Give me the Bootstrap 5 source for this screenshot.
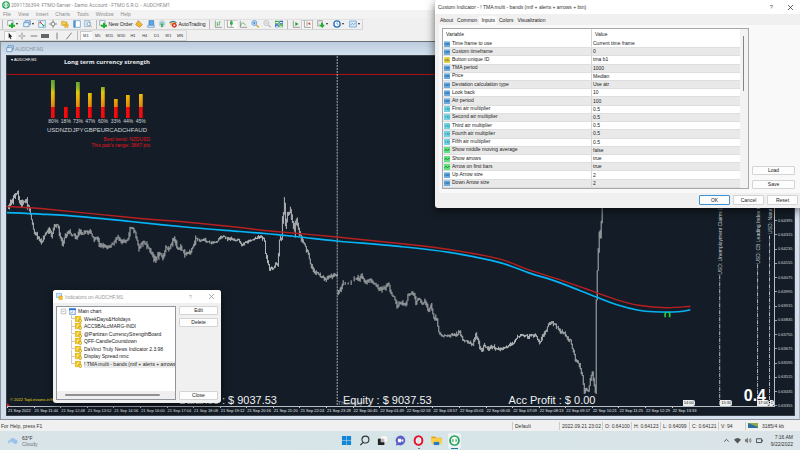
<!DOCTYPE html>
<html lang="en">
<head>
<meta charset="utf-8">
<meta name="viewport" content="width=device-width, initial-scale=1">
<title>AUDCHF,M1 - Trading terminal</title>
<link href="https://cdn.jsdelivr.net/npm/bootstrap@5.3.0/dist/css/bootstrap.min.css" rel="stylesheet">
<style>
:root{--ui:"Liberation Sans",Arial,sans-serif;--chart-bg:#141d27;--face:#f0f0f0}
body{font-family:var(--ui);font-size:5px;line-height:8px;color:#222;background:var(--face)}
svg{display:block}
button,a{color:inherit;text-decoration:none}
.titlebar{height:10px;padding:0 2px;background:#fff;color:#8b8b8b;gap:1px;font-family:Roboto,sans-serif}
.menubar{height:8px;padding-left:3px;color:#8b8b8b;background:#f3f3f3;gap:7px}
.tool-row{height:12px;background:var(--face)}
.tool-row+.tool-row{height:11px}
.tool-set{height:11px;border:1px solid #d5d5d5;border-left:0;border-top-color:#e2e2e2}
.tool-set>.grip{width:2px;height:9px;border-left:1px solid #bbb;margin:0 1px 0 2px}
.tool-set>.grip.bare{margin:0}
.tool-group{display:flex;align-items:center;height:100%}
.tool{border:0;background:none;padding:0;display:flex;align-items:center;justify-content:center;flex:1 1 0;height:100%;gap:1px;font-size:5px;line-height:8px;white-space:nowrap}
.g-frames .tool{font-size:4px;color:#333}
.tool.pressed{background:#fafafa;box-shadow:inset 1px 1px #ccc}
.tool svg{width:8px;height:8px;flex:none}
.tool .drop{width:0;height:0;border:1px solid transparent;border-top:2px solid #222;border-bottom:0}
.g-new{width:31px}.g-panels{width:58px}.g-order{width:34px}.g-extra{width:35px}.g-auto{width:39px}
.g-style{width:37px}.g-zoom{width:36px}.g-shift{width:22px}.g-menus{width:48px}.g-draw{width:75px}.g-frames{width:106px}
.mdi{background:#d5e0ee;border-top:1px solid #6b7077;border-bottom:1px solid #8b939c;min-height:0}
.child-title{height:13px;padding-left:5px;gap:1px;color:#8792a0;background:linear-gradient(#bccddd,#d3e1ef)}
.child-body{margin:0 4px 3px 5px;border:1px solid #3b4046;background:var(--chart-bg);color:#fff;min-height:0}
.edge{border-left:1px solid #8d939b;border-right:1px solid #aab3bf}
.plot{border-right:1px solid #b9bec4;border-bottom:1px solid #b9bec4}
.layer{position:absolute}
.prices{width:19px;padding:1px 0 2px;font-size:4px;line-height:4px;color:#d5d8db}
.prices span{flex:1 1 0;display:flex;align-items:center;gap:1px}
.prices span::before{content:"";width:2px;height:1px;background:#9ba1a7}
.times{display:grid;grid-template-columns:repeat(29,1fr);height:8px;margin-right:-3px;font-size:4px;line-height:8px;color:#e6e8ea;white-space:nowrap}
.times span{border-left:1px solid transparent;border-image:linear-gradient(#c9cdd1 2px,transparent 2px) 1}
.symbol-name{left:4px;top:1px;font-size:4px;line-height:6px}
.strength{left:40px;top:2px;width:103px}
.strength h2{font:bold 6px/8px "Open Sans",sans-serif;margin:0 0 14px;text-align:right;color:#e6e8ea;white-space:nowrap}
.meters{display:grid;grid-template-columns:repeat(8,1fr);width:100px;font-size:5px;line-height:7px;text-align:center;color:#d0d4d8}
.meters .tube{height:38px;display:flex;align-items:flex-end;justify-content:center}
.meters i{width:4px;background:linear-gradient(90deg,transparent 60%,#0005),linear-gradient(#5da63a,#8db52a 8px,#dccb0c 12px,#eeb00c 18px,#e0840d 27px,#f00d0d 27px) bottom/100% 38px}
.meters .ccy{font-size:6px;line-height:9px;margin-top:1px}
.trend{color:#e0141c;text-align:right;line-height:6px;margin-top:1px}
.account{left:0;right:0;bottom:0;font-size:11px;line-height:12px;color:#eef0f2;white-space:nowrap}
.account span,.flag,.news{position:absolute}
.account span{bottom:0}
.copyright{left:3px;bottom:3px;line-height:6px;font-size:4px;color:#e2d615}
.weekday{left:43.1%;bottom:-1px;font-size:6px;line-height:7px;color:#8d949b}
.spread{right:8px;bottom:2px;font:bold 16px/16px var(--ui);color:#fff}
.flag{bottom:0;height:6px;background:#eceeef;color:#222;font-size:4px;line-height:6px;padding:0 1px;border-radius:0 2px 2px 0;overflow:hidden}
.news{writing-mode:vertical-rl;transform:rotate(180deg);font-size:5px;line-height:6px;color:#c9cdd1;white-space:nowrap}
.statusbar{height:11px;background:var(--face);padding-left:1px;color:#333;white-space:nowrap}
.statusbar>span{border-left:1px solid #ccc;padding-left:2px;flex:none}
.w29{width:29px}.w47{width:47px}.w43{width:43px}.w27{width:27px}.w55{width:55px}
.taskbar{height:19px;background:linear-gradient(90deg,#d9e4e9,#d6e5e8 50%,#dbe4e8);color:#333}
.weather{left:8px;gap:4px;line-height:6px}
.apps{gap:5px}
.app{border:0;background:none;padding:2px 1px;border-radius:2px;position:relative;width:13px;height:16px;display:flex;align-items:center;justify-content:center}
.app svg{width:11px;height:11px}
.app.open::after{content:"";position:absolute;bottom:0;left:6px;width:2px;height:1px;background:#777}
.app.current{background:#ecf3f5}
.app.current::after{content:"";position:absolute;bottom:0;left:3px;width:7px;height:1px;background:#1b7f93}
.tray{right:7px;gap:4px}
.tray svg{width:7px;height:7px}
.clock{line-height:7px;text-align:right;min-width:26px}
.window{position:absolute;background:var(--face);border-radius:3px;box-shadow:0 3px 10px #0009;color:#222;overflow:hidden}
.window-title{background:#fff}
.window-title button{border:0;background:none;padding:0;width:19px;line-height:8px}
.push{border:1px solid #d4d4d4;border-radius:1px;background:#fdfdfd;padding:0;font-size:5px;line-height:7px;height:9px;color:#222}
.push.default{border-color:#3d93d6}
.props{top:0;right:0;width:365px;border-radius:3px 0 0 3px}
.props .window-title{height:14px;padding-left:3px;font-size:5px;color:#333}
.tabs{padding:2px 0 0 3px;line-height:9px}
.tabs button{border:0;background:none;padding:0 2px;font-size:5px;line-height:9px;white-space:nowrap}
.tabs .active{background:#f9f9f9}
.page{background:#f9f9f9;margin-left:4px;padding:3px 5px 4px 3px;gap:3px}
.gridbox{width:307px;height:161px;border:1px solid #a3a8ad;background:#fff;overflow:hidden}
.gridbox table{width:100%;height:159px;border-collapse:collapse;line-height:5px}
.gridbox th{font-weight:400;height:11px;padding:0 3px;vertical-align:middle}
.gridbox td{padding:0 1px;vertical-align:middle;border-bottom:1px solid #dedede}
.gridbox tbody tr:nth-child(even){background:#e9e9e9}
.gridbox th+th,.gridbox td+td{border-left:1px solid #d5d5d5;width:50%}
.gridbox th:first-child{width:50%}
.gridbox td svg{width:6px;height:6px;display:inline-block;margin-right:2px;vertical-align:middle}
.vbar{width:8px;flex:none;background:#f3f3f3;padding:7px 3px}
.vbar div{width:1px;height:55px;background:#858585}
.side{width:43px;gap:5px}
.foot{padding:2px 2px 3px;gap:3px}
.foot .push{width:31px;height:10px}
.list{left:53px;bottom:47px;width:168px}
.list .window-title{height:13px;padding-left:3px;gap:2px;color:#999}
.list .cols{padding:3px;gap:3px}
.treebox{width:120px;height:94px;border:1px solid #8f959b;background:#fff;padding-top:1px;overflow:hidden}
.tree{height:60px;margin:0;padding:0;list-style:none;white-space:nowrap;line-height:7px}
.tree li{flex:1 1 0;display:flex;align-items:center;gap:2px;padding-left:15px}
.tree li:first-child{padding-left:3px}
.tree li+li::before{content:"";flex:none;width:4px;height:7px;border-left:1px solid #ccc;border-bottom:1px solid #ccc;margin:-7px -2px 0 -1px}
.tree svg{width:7px;height:7px;flex:none}
.tree .sel{background:#ececec;height:7px;flex:1 1 0;min-width:0;overflow:hidden}
.hbar{height:8px;background:#efefef;padding:3px 15px 0 8px}
.hbar div{height:2px;background:#919191;border-radius:1px}
.col-btn{width:39px;gap:3px}
</style>
<script src="https://cdn.jsdelivr.net/npm/bootstrap@5.3.0/dist/js/bootstrap.bundle.min.js"></script>
</head>
<body class="vh-100 overflow-hidden position-relative d-flex flex-column">

<svg width="0" height="0" class="position-absolute" aria-hidden="true">
  <symbol id="ftmo" viewBox="0 0 12 12"><circle cx="6" cy="6" r="5.8" fill="#21a355"/><path d="M5.5 2.5C2 3 2 9 5.5 9.5ZM6.5 2.5V9.5C10 9 10 3 6.500 2.500" fill="none" stroke="#fff" stroke-width="1.300"/></symbol>
  <symbol id="plus-chart" viewBox="0 0 12 12"><path d="M1 1h8v7H1z" fill="#fff" stroke="#6b8aa5"/><path d="M6 4h3v3h3v3H9v2H6v-2H3V7h3z" fill="#1fae2b"/></symbol>
  <symbol id="profiles" viewBox="0 0 12 12"><path d="M3 1h8v6H3z" fill="#bcd8f2" stroke="#4d83b8"/><path d="M1 4h8v6H1z" fill="#e4f1fc" stroke="#4d83b8"/></symbol>
  <symbol id="watch" viewBox="0 0 12 12"><path d="M1 1h10v10H1z" fill="#eaf4fd" stroke="#5c97cf"/><path d="M3 3l3 3M3 3h2M3 3v2" stroke="#d63b2f" stroke-width="1.500"/><path d="M9 9L6 6M9 9H7M9 9V7" stroke="#22a23a" stroke-width="1.500"/></symbol>
  <symbol id="target" viewBox="0 0 12 12"><circle cx="6" cy="6" r="3" fill="none" stroke="#666"/><path d="M6 0v4M6 8v4M0 6h4M8 6h4" stroke="#666"/></symbol>
  <symbol id="navigator" viewBox="0 0 12 12"><path d="M1 2h4l1 1h3v5H1z" fill="#f4cc4f" stroke="#c89a26"/><path d="M8 5l1 2 3 .500-2 1.500.5 3-2.500-1.500-2.500 1.500.5-3-2-1.500 3-.500z" fill="#f6b92c" stroke="#a8801b" stroke-width=".4"/></symbol>
  <symbol id="terminal" viewBox="0 0 12 12"><path d="M1 1h10v10H1z" fill="#fff" stroke="#4e8fd0"/><path d="M1 1h3v10H1z" fill="#4e8fd0"/></symbol>
  <symbol id="tester" viewBox="0 0 12 12"><path d="M1 1h8v9H1z" fill="#dcebf8" stroke="#7ba2c6"/><circle cx="7" cy="6" r="2.500" fill="#fff" stroke="#5486b4"/><path d="M9 8l3 3" stroke="#d19a2c" stroke-width="1.500"/></symbol>
  <symbol id="diamond" viewBox="0 0 12 12"><path d="M5 1l6 6-4 4-6-4z" fill="#f3b72c" stroke="#b57e15"/></symbol>
  <symbol id="host" viewBox="0 0 12 12"><path d="M3 1h7v7H3z" fill="#5ba7e8" stroke="#2f76b9"/><path d="M1 8h10v3H1z" fill="#cfe2f4" stroke="#6595c2"/></symbol>
  <symbol id="signal" viewBox="0 0 12 12"><circle cx="6" cy="5.500" r="4.500" fill="none" stroke="#9fb8c9"/><circle cx="6" cy="5.500" r="2.500" fill="#8ed193" stroke="#59a4ce"/><path d="M6 6v5" stroke="#22a83a" stroke-width="2"/></symbol>
  <symbol id="auto" viewBox="0 0 12 12"><path d="M1 4q5-6 10 0l-1 4H2z" fill="#f1b93c"/><path d="M1 4q5-4 10 0" stroke="#3c83bd" stroke-width="2" fill="none"/><circle cx="8" cy="8" r="3.600" fill="#d9281e"/><path d="M6.700 6.700h2.600v2.600H6.700z" fill="#fff"/></symbol>
  <symbol id="bars" viewBox="0 0 12 12"><path d="M2 1v10h10" fill="none" stroke="#777"/><path d="M5 3v6M8 2v6M5 7h2M8 3h2" stroke="#2ca53b"/></symbol>
  <symbol id="candles" viewBox="0 0 12 12"><path d="M2 1v10h10M8 0v10" fill="none" stroke="#777"/><path d="M6 2h4v5H6z" fill="#2cb53f"/></symbol>
  <symbol id="linechart" viewBox="0 0 12 12"><path d="M2 1v10h10" fill="none" stroke="#777"/><path d="M2 9q3-9 8-1" fill="none" stroke="#2ca53b"/></symbol>
  <symbol id="zoomin" viewBox="0 0 12 12"><path d="M8 8l4 3" stroke="#d7a021" stroke-width="2"/><circle cx="5" cy="4.500" r="3.700" fill="#d9ecfb" stroke="#3384cb"/><path d="M3 4.500h4M5 2.500v4" stroke="#1d6cb6"/></symbol>
  <symbol id="zoomout" viewBox="0 0 12 12"><path d="M8 8l4 3" stroke="#bbb" stroke-width="2"/><circle cx="5" cy="4.500" r="3.700" fill="#f2f2f2" stroke="#aaa"/><path d="M3 4.500h4" stroke="#aaa"/></symbol>
  <symbol id="tiles" viewBox="0 0 12 12"><path d="M0 1h5.500v4.500H0zM6.500 6.500H12V11H6.500z" fill="#39ab3c"/><path d="M6.500 1H12v4.500H6.500zM0 6.500h5.500V11H0z" fill="#2d67be"/><path d="M1 3h3.500v1.500H1zM7.500 3H11v1.500H7.500zM1 8.500h3.500V10H1zM7.500 8.500H11V10H7.500z" fill="#fff"/></symbol>
  <symbol id="scroll" viewBox="0 0 12 12"><path d="M2 1v10h10" fill="none" stroke="#777"/><path d="M5 3l5 3-5 3z" fill="#2aa53b"/></symbol>
  <symbol id="shift" viewBox="0 0 12 12"><path d="M2 1v10h10M6 2v7" fill="none" stroke="#777"/><path d="M11 3v5L7 5.500z" fill="#cf5c35"/></symbol>
  <symbol id="indicator" viewBox="0 0 12 12"><path d="M1 1h7v8H1z" fill="#e8e8e8" stroke="#888"/><path d="M6 4h3v3h3l-4 5-5-5h3z" fill="#1fae2b"/></symbol>
  <symbol id="period" viewBox="0 0 12 12"><circle cx="6" cy="6" r="4.700" fill="#fff" stroke="#2571bd" stroke-width="2"/><path d="M6 3.500V6l2 1" stroke="#2571bd" fill="none"/></symbol>
  <symbol id="template" viewBox="0 0 12 12"><path d="M1 1.500h10v9H1z" fill="#d9eafa" stroke="#5a93ca"/><path d="M2 8l3-3 2 2 3-3" stroke="#4b87bf" fill="none"/></symbol>
  <symbol id="cursor" viewBox="0 0 12 12"><path d="M4 1l5.500 6H6.800l1.400 3.500-1.400.5L5.500 8 4 9.500z" fill="#222"/></symbol>
  <symbol id="cross" viewBox="0 0 12 12"><path d="M6 1v4M6 7v4M1 6h4M7 6h4" stroke="#555"/></symbol>
  <symbol id="hline" viewBox="0 0 12 12"><path d="M1 6h10" stroke="#444"/></symbol>
  <symbol id="hlines" viewBox="0 0 12 12"><path d="M0 3h12v6H0z" fill="#777"/><path d="M0 4.500h12M0 7.500h12" stroke="#444"/></symbol>
  <symbol id="vline" viewBox="0 0 12 12"><path d="M6 1v10" stroke="#444"/></symbol>
  <symbol id="slash" viewBox="0 0 12 12"><path d="M2 11L10 1" stroke="#444"/></symbol>
  <symbol id="v-int" viewBox="0 0 12 12"><path d="M0 1h12v11H0z" fill="#6cabe0"/><path d="M2 4v4M5 8V5h2v3M9.500 4v4M9 5.500h2" stroke="#17568f" fill="none"/><path d="M0 0h12v2H0z" fill="#9ccdf0"/></symbol>
  <symbol id="v-str" viewBox="0 0 12 12"><path d="M0 0h12v12H0z" fill="#e8d44e"/><path d="M2 8V5h3v3zM7 3v5h3V5.500H7" stroke="#857312" fill="none"/></symbol>
  <symbol id="v-dbl" viewBox="0 0 12 12"><path d="M0 0h12v12H0z" fill="#73d3e3"/><path d="M2 4l1.500 4M7 4v4M5.500 4H7M9 4h2L9 8h2" stroke="#1b8497" fill="none"/></symbol>
  <symbol id="v-bool" viewBox="0 0 12 12"><path d="M0 0h12v12H0z" fill="#63e080"/><path d="M1 8l3-4 3 4 3-4 1 2" stroke="#117a2d" fill="none" stroke-width="1.300"/></symbol>
  <symbol id="chartwin" viewBox="0 0 12 12"><path d="M.5 1h11v10H.5z" fill="#fff" stroke="#2d71d2"/><path d="M0 1h12v3H0z" fill="#2d71d2"/><path d="M3 6v4M6 5v4M9 6v4" stroke="#7fa4d8"/></symbol>
  <symbol id="fx" viewBox="0 0 12 12"><path d="M0 0h10v10H0z" fill="#f2c51f" stroke="#c99b0d" stroke-width=".6"/><path d="M3 8q1 0 1.500-3T6.500 2M3 4.500h3" stroke="#fff8c8" fill="none"/><path d="M9 5l3 3.500L9 12 6 8.500z" fill="#ffe15a" stroke="#8d6b08" stroke-width=".8"/></symbol>
  <symbol id="listicon" viewBox="0 0 12 12"><path d="M.5.500h9v7h-9z" fill="#d7e9fa" stroke="#5294d2"/><path d="M5 5h6v6H5z" fill="#f2c51f" stroke="#c2930b" stroke-width=".6"/></symbol>
</svg>

<header>
  <div class="titlebar d-flex align-items-center"><svg width="8" height="8"><use href="#ftmo"/></svg><span>2091136394: FTMO-Server - Demo Account - FTMO S.R.O. - AUDCHF,M1</span></div>
  <nav class="menubar d-flex align-items-center"><a href="#">File</a><a href="#">View</a><a href="#">Insert</a><a href="#">Charts</a><a href="#">Tools</a><a href="#">Window</a><a href="#">Help</a></nav>
  <div class="tool-row d-flex align-items-center">
    <div class="tool-set d-flex align-items-center">
      <span class="grip"></span>
      <div class="tool-group g-new"><button class="tool" aria-label="New chart"><svg><use href="#plus-chart"/></svg><span class="drop"></span></button><button class="tool" aria-label="Profiles"><svg><use href="#profiles"/></svg><span class="drop"></span></button></div>
      <div class="tool-group g-panels"><button class="tool" aria-label="Market watch"><svg><use href="#watch"/></svg></button><button class="tool" aria-label="Data window"><svg><use href="#target"/></svg></button><button class="tool" aria-label="Navigator"><svg><use href="#navigator"/></svg></button><button class="tool" aria-label="Terminal"><svg><use href="#terminal"/></svg></button><button class="tool" aria-label="Tester"><svg><use href="#tester"/></svg></button></div>
      <span class="grip"></span>
      <div class="tool-group g-order"><button class="tool"><svg><use href="#plus-chart"/></svg>New Order</button></div>
      <div class="tool-group g-extra"><button class="tool" aria-label="MetaEditor"><svg><use href="#diamond"/></svg></button><button class="tool" aria-label="Hosting"><svg><use href="#host"/></svg></button><button class="tool" aria-label="Signals"><svg><use href="#signal"/></svg></button></div>
      <div class="tool-group g-auto"><button class="tool"><svg><use href="#auto"/></svg>AutoTrading</button></div>
      <span class="grip"></span>
      <div class="tool-group g-style"><button class="tool" aria-label="Bars"><svg><use href="#bars"/></svg></button><button class="tool pressed" aria-label="Candles"><svg><use href="#candles"/></svg></button><button class="tool" aria-label="Line"><svg><use href="#linechart"/></svg></button></div>
      <div class="tool-group g-zoom"><button class="tool" aria-label="Zoom in"><svg><use href="#zoomin"/></svg></button><button class="tool" aria-label="Zoom out"><svg><use href="#zoomout"/></svg></button><button class="tool" aria-label="Tile"><svg><use href="#tiles"/></svg></button></div>
      <span class="grip"></span>
      <div class="tool-group g-shift"><button class="tool" aria-label="Auto scroll"><svg><use href="#scroll"/></svg></button><button class="tool pressed" aria-label="Chart shift"><svg><use href="#shift"/></svg></button></div>
      <span class="grip bare"></span>
      <div class="tool-group g-menus"><button class="tool" aria-label="Indicators"><svg><use href="#indicator"/></svg><span class="drop"></span></button><button class="tool" aria-label="Periods"><svg><use href="#period"/></svg><span class="drop"></span></button><button class="tool" aria-label="Templates"><svg><use href="#template"/></svg><span class="drop"></span></button></div>
    </div>
  </div>
  <div class="tool-row d-flex align-items-center">
    <div class="tool-set d-flex align-items-center">
      <div class="tool-group g-draw ps-1"><button class="tool pressed" aria-label="Cursor"><svg><use href="#cursor"/></svg></button><button class="tool" aria-label="Crosshair"><svg><use href="#cross"/></svg></button><button class="tool" aria-label="Horizontal line"><svg><use href="#hline"/></svg></button><button class="tool" aria-label="Channel"><svg><use href="#hlines"/></svg></button><button class="tool" aria-label="Vertical line"><svg><use href="#vline"/></svg></button><button class="tool" aria-label="Trendline"><svg><use href="#slash"/></svg></button></div>
      <span class="grip"></span>
      <div class="tool-group g-frames"><button class="tool pressed">M1</button><button class="tool">M5</button><button class="tool">M15</button><button class="tool">M30</button><button class="tool">H1</button><button class="tool">H4</button><button class="tool">D1</button><button class="tool">W1</button><button class="tool">MN</button></div>
    </div>
  </div>
</header>

<main class="mdi edge flex-grow-1 d-flex flex-column">
  <div class="child-title d-flex align-items-center flex-shrink-0"><svg width="8" height="8"><use href="#profiles"/></svg><span>AUDCHF,M1</span></div>
  <div class="child-body flex-grow-1 d-flex">
    <div class="flex-grow-1 d-flex flex-column">
      <div class="plot flex-grow-1 position-relative">
        <svg id="plot" class="layer w-100 h-100" viewBox="6 56 770 351" preserveAspectRatio="none" role="img" aria-label="Price chart">
          <path d="M6 74.500H776" stroke="#b1121b"/>
          <path d="M337.500 56V407" stroke="#a9afb5" stroke-dasharray="2 1"/>
          <path d="M721.500 276V407M759.500 265V407M771.500 236V407" stroke="#b4b9be" stroke-dasharray="4 1 1 1"/>
          <path id="wicks" stroke="#b4b7b9" fill="none"/>
          <path id="upper" stroke="#b8201f" stroke-width="1.400" fill="none"/>
          <path id="lower" stroke="#06b3f5" stroke-width="1.700" fill="none"/>
          <path d="M667 318q-1.200-4 .9-5M671 318q1.200-4-.9-5" stroke="#1fd03a" stroke-width="1.700" fill="none"/>
          <path d="M6 404l3 3H6z" fill="#e01d1d"/>
        </svg>
        <div class="layer symbol-name">▾ AUDCHF,M1</div>
        <section class="layer strength">
          <h2>Long term currency strength</h2>
          <div class="meters" id="meters"></div>
          <div class="trend">Best trend: NZDUSD<br>This pair's range: 3867 pts</div>
        </section>
        <div class="news" style="right:51px;bottom:131px">USD: Unemployment Claims | CAD: New Housing</div>
        <div class="news" style="right:13px;bottom:142px">USD: CB Leading Index m/m | EUR: Index</div>
        <div class="news" style="right:1px;bottom:172px">USD: Natural Gas Storage</div>
        <div class="layer copyright">© 2022 TopLessons.in/ftmo</div>
        <div class="layer weekday">Thursday</div>
        <div class="layer account"><span style="right:64.8%">Balance : $ 9037.53</span><span style="left:43.8%">Equity : $ 9037.53</span><span style="left:65.4%">Acc Profit : $ 0.00</span></div>
        <div class="flag" style="left:88.1%">14:00</div><div class="flag" style="left:93%">15:30</div><div class="flag" style="left:97.8%">17:00</div>
        <div class="flag" style="right:0">1</div>
        <div class="layer spread">0.4</div>
      </div>
      <div class="times flex-shrink-0" id="times"></div>
    </div>
    <div class="prices d-flex flex-column" id="prices"></div>
  </div>
</main>

<footer>
  <div class="statusbar d-flex align-items-center">
    <div class="flex-grow-1">For Help, press F1</div>
    <span class="w47">Default</span><span class="w43">2022.09.21 23:02</span><span class="w29">O: 0.64100</span><span class="w29">H: 0.64123</span><span class="w29">L: 0.64099</span><span class="w29">C: 0.64121</span><span class="w27">V: 94</span>
    <span class="w55 d-flex align-items-center gap-1"><svg width="10" height="5"><path d="M0 0h10v5H0z" fill="#8fae4b"/><path d="M0 0l10 4v1H0z" fill="#2f6f9d"/></svg>3185/4 kb</span>
  </div>
  <div class="taskbar position-relative d-flex align-items-center justify-content-center">
    <div class="layer weather d-flex align-items-center"><svg width="10" height="8" viewBox="0 0 10 8"><path d="M2 7a2 2 0 010-4 3 3 0 015.500-.5A2.300 2.300 0 018 7z" fill="#9dc3ea"/><path d="M1 7a2 2 0 013-2l3 2z" fill="#cfe2f6"/></svg><div>63°F<br><span class="text-secondary">Cloudy</span></div></div>
    <div class="apps d-flex align-items-center">
      <button class="app" aria-label="Start"><svg viewBox="0 0 12 12"><path d="M1 1h4.800v4.800H1zM6.300 1H11v4.800H6.300zM1 6.300h4.800V11H1zM6.300 6.300H11V11H6.300z" fill="#0f86d8"/></svg></button>
      <button class="app" aria-label="Search"><svg viewBox="0 0 12 12"><circle cx="7" cy="5" r="3.800" fill="none" stroke="#333" stroke-width="1.200"/><path d="M4.300 8L1.500 11" stroke="#333" stroke-width="1.400"/></svg></button>
      <button class="app" aria-label="Task view"><svg viewBox="0 0 12 12"><path d="M4 1h7.500v7H4z" fill="#f8f8f8" stroke="#ccc" stroke-width=".4"/><path d="M1 4h7v7H1z" fill="#bbb"/><path d="M1 4h3v4h4v3H1z" fill="#222"/></svg></button>
      <button class="app" aria-label="Chat"><svg viewBox="0 0 12 12"><path d="M6 .5a5.400 5.400 0 11-2.500 10.300L1 11.500l.6-2.700A5.400 5.400 0 016 .5z" fill="#5b5fc7"/><path d="M3.200 4h3.600v4H3.200zM7.200 5.500L9 4.300v3.400L7.200 6.500z" fill="#fff"/></svg></button>
      <button class="app open" aria-label="Opera"><svg viewBox="0 0 12 12"><ellipse cx="6" cy="6" rx="4.200" ry="4.700" fill="#fff" stroke="#e3152b" stroke-width="2.200"/><ellipse cx="6" cy="6" rx="2" ry="3.600" fill="#dbe5ea"/></svg></button>
      <button class="app" aria-label="Files"><svg viewBox="0 0 12 12"><path d="M.5 1.500h4l1 1.500h6v4H.5z" fill="#e8a317"/><path d="M.5 3.500h11V10H.5z" fill="#fbcf45"/><path d="M3 7.500h6V11H3z" fill="#2879c9"/></svg></button>
      <button class="app current" aria-label="FTMO"><svg><use href="#ftmo" width="11" height="11"/></svg></button>
    </div>
    <div class="layer tray d-flex align-items-center">
      <svg viewBox="0 0 12 12"><path d="M2 8l4-4 4 4" fill="none" stroke="#333" stroke-width="1.400"/></svg>
      <svg viewBox="0 0 12 12"><path d="M0 4.500a9 9 0 0112 0L6 11z" fill="#555"/></svg>
      <svg viewBox="0 0 12 12"><path d="M0 4h2l3-3v10L2 8H0z" fill="#777"/><path d="M7 3.500q2 2.500 0 5M9 2q3 4 0 8" fill="none" stroke="#444"/></svg>
      <svg viewBox="0 0 12 12"><path d="M.7 3h9v6.500h-9zM11 5v2.500" fill="none" stroke="#333" stroke-width="1.400"/></svg>
      <div class="clock">7:16 AM<br>9/22/2022</div>
    </div>
  </div>
</footer>

<section class="window list" aria-label="Indicators on AUDCHF,M1">
  <div class="window-title d-flex align-items-center"><svg width="7" height="7"><use href="#listicon"/></svg><span class="flex-grow-1">Indicators on AUDCHF,M1</span><button>?</button><button aria-label="Close window"><svg width="5" height="5" viewBox="0 0 5 5" class="mx-auto"><path d="M0 0l5 5M5 0L0 5" stroke="#888" stroke-width=".7"/></svg></button></div>
  <div class="cols d-flex">
    <div class="treebox d-flex flex-column">
      <ul class="tree d-flex flex-column">
        <li><svg width="4" height="4" viewBox="0 0 12 12"><path d="M2 2h8v8H2zM4 6h4" fill="#fff" stroke="#999"/></svg><svg><use href="#chartwin"/></svg>Main chart</li>
        <li><svg><use href="#fx"/></svg>WeekDays&amp;Holidays</li>
        <li><svg><use href="#fx"/></svg>ACC9BALcMARG-INDI</li>
        <li><svg><use href="#fx"/></svg>@Partizan CurrencyStrengthBoard</li>
        <li><svg><use href="#fx"/></svg>QFF-CandleCountdown</li>
        <li><svg><use href="#fx"/></svg>DaVinci Truly News Indicator 2.3.98</li>
        <li><svg><use href="#fx"/></svg>Display Spread nmc</li>
        <li><svg><use href="#fx"/></svg><span class="sel">! TMA multi - bands (mtf + alerts + arrows +</span></li>
      </ul>
      <div class="hbar mt-auto"><div></div></div>
    </div>
    <div class="col-btn d-flex flex-column"><button class="push">Edit</button><button class="push">Delete</button><button class="push mt-auto">Close</button></div>
  </div>
</section>

<section class="window props" aria-label="Custom Indicator">
  <div class="window-title d-flex align-items-center"><span class="flex-grow-1">Custom Indicator - ! TMA multi - bands (mtf + alerts + arrows + btn)</span><button>?</button><button aria-label="Close window"><svg width="5" height="5" viewBox="0 0 5 5" class="mx-auto"><path d="M0 0l5 5M5 0L0 5" stroke="#222" stroke-width=".7"/></svg></button></div>
  <div class="tabs d-flex"><button>About</button><button>Common</button><button class="active">Inputs</button><button>Colors</button><button>Visualization</button></div>
  <div class="page d-flex">
    <div class="gridbox d-flex"><table><thead><tr><th>Variable</th><th>Value</th></tr></thead><tbody id="inputs"></tbody></table><div class="vbar"><div></div></div></div>
    <div class="side d-flex flex-column justify-content-end"><button class="push">Load</button><button class="push">Save</button></div>
  </div>
  <div class="foot d-flex justify-content-end"><button class="push default">OK</button><button class="push">Cancel</button><button class="push">Reset</button></div>
</section>

<script>
const el = id => document.getElementById(id);

// Indicator inputs: icon kind, name, value
el('inputs').innerHTML = [
  ['int','Time frame to use','Current time frame'],['int','Custom timeframe','0'],['str','Button unique ID','tma b1'],
  ['int','TMA period','1000'],['int','Price','Median'],['int','Deviation calculation type','Use atr'],
  ['int','Look back','10'],['int','Atr period','100'],['dbl','First atr multiplier','0.5'],['dbl','Second atr multiplier','0.5'],
  ['dbl','Third atr multiplier','0.5'],['dbl','Fourth atr multiplier','0.5'],['dbl','Fifth atr multiplier','0.5'],
  ['bool','Show middle moving average','false'],['bool','Show arrows','true'],['bool','Arrow on first bars','true'],
  ['int','Up Arrow size','2'],['int','Down Arrow size','2']
].map(([k,n,v]) => `<tr><td><svg><use href="#v-${k}"/></svg>${n}</td><td>${v}</td></tr>`).join('');

// Currency strength meters: name, percent, bar height
el('meters').innerHTML = [['USD',80,38],['NZD',18,11],['JPY',73,36],['GBP',47,25],['EUR',60,31],['CAD',33,19],['CHF',44,23],['AUD',45,24]]
  .map(([c,p,h]) => `<div><div class="tube"><i style="height:${h}px"></i></div>${p}%<div class="ccy">${c}</div></div>`).join('');

// Axes
el('times').innerHTML = ['21 Sep 2022','21 Sep 11:44','21 Sep 12:48','21 Sep 13:52','21 Sep 14:56','21 Sep 16:00','21 Sep 17:04','21 Sep 18:08','21 Sep 19:12','21 Sep 20:16','21 Sep 21:20','21 Sep 22:24','21 Sep 23:28','22 Sep 00:45','22 Sep 01:49','22 Sep 02:53','22 Sep 03:57','22 Sep 05:01','22 Sep 06:05','22 Sep 07:09','22 Sep 08:13','22 Sep 09:17','22 Sep 10:21','22 Sep 11:25','22 Sep 12:29','22 Sep 13:33']
  .map(t => `<span>${t}</span>`).join('');
el('prices').innerHTML = Array.from({length:25}, (_,i) => `<span>${((65275 - 80*i)/100000).toFixed(5)}</span>`).join('');

// Price bars: a wick for each step along the anchor points
const price = [7,208,10,200,13,196,16,192,18,203,20,205,24,200,27,206,29,214,31,224,33,233,36,238,40,243,44,234,48,230,50,238,53,226,56,225,58,234,61,243,64,236,67,231,70,235,73,235,75,239,78,231,81,234,85,232,89,232,92,239,96,239,99,246,103,246,106,248,110,246,114,241,117,237,120,243,124,241,127,239,129,228,132,229,134,232,136,240,138,248,140,245,143,243,146,246,149,252,152,255,154,260,157,256,160,254,162,258,165,248,168,250,170,245,172,240,174,240,177,250,180,248,183,253,186,254,190,252,192,247,195,239,199,241,203,240,207,242,211,243,215,243,219,238,222,236,225,239,230,239,235,241,238,240,241,246,246,242,252,240,258,237,262,237,264,241,265,255,267,262,269,269,273,268,275,263,277,266,279,240,281,238,282,223,284,204,285,225,287,214,289,213,290,211,291,216,294,232,296,219,298,229,301,238,304,245,307,251,310,264,313,272,317,274,321,277,325,279,330,277,335,276,337,275,338,293,341,289,343,282,346,285,350,283,354,277,358,280,361,276,365,283,370,280,373,283,376,286,379,290,384,288,389,285,391,294,394,297,397,307,399,305,402,303,406,305,408,296,412,293,414,295,416,304,419,298,422,305,425,302,428,310,431,306,434,318,437,320,439,333,442,337,445,336,448,337,452,335,456,336,460,333,463,340,466,342,470,344,473,345,476,335,479,344,482,352,484,345,488,349,494,348,500,350,507,348,513,344,518,338,522,335,528,337,536,336,540,343,545,334,549,325,553,323,557,327,561,333,565,333,569,342,571,340,573,348,576,360,580,366,583,377,585,393,587,389,589,392,591,380,593,373,595,385,596,394,597,300,598,270,599,250,600,232,601,238,602,222,603,207,605,196,608,180];
// Busy stretches have longer wicks
const reach = x => x < 30 ? 6 : x > 281 && x < 300 ? 9 : x > 140 && x < 195 ? 5 : x > 195 && x < 262 ? 2 : x > 440 && x < 600 ? 3 : 3.500;
let seed = 7, d = '', prev = price[1], k = 0;
const rnd = () => (seed = seed * 16807 % 2147483647) / 2147483647;
for (let x = 7; x < 608; x += 1) {
  while (k < price.length - 4 && price[k + 2] <= x) k += 2;
  const t = (x - price[k]) / (price[k + 2] - price[k]);
  const y = price[k + 1] + (price[k + 3] - price[k + 1]) * Math.min(1, t) + (rnd() - .5) * 2;
  const r = reach(x), from = x === 338 ? y : prev;
  const skip = x > 343 && x < 356 && x % 3;
  if (!skip) d += `M${x + .5} ${(Math.min(from, y) - rnd() * rnd() * r).toFixed(1)}V${(Math.max(from, y) + .5 + rnd() * rnd() * r).toFixed(1)}`;
  prev = y;
}
el('wicks').setAttribute('d', d);

// Smooth curve through a flat list of x,y pairs
function curve(p) {
  const n = p.length / 2, at = i => { i = Math.max(0, Math.min(n - 1, i)); return [p[2*i], p[2*i+1]]; };
  let s = `M${at(0)}`;
  for (let i = 0; i < n - 1; i++) {
    const [a, b, c, e] = [at(i-1), at(i), at(i+1), at(i+2)];
    s += `C${b[0]+(c[0]-a[0])/6} ${b[1]+(c[1]-a[1])/6} ${c[0]-(e[0]-b[0])/6} ${c[1]-(e[1]-b[1])/6} ${c}`;
  }
  return s;
}
el('upper').setAttribute('d', curve([6,207,40,209,130,218,190,223,240,228,270,231.500,337,237.500,400,244,450,250,500,259.500,530,270.500,560,280,597,293,620,301,640,306,668,308.500,692,307]));
el('lower').setAttribute('d', curve([6,213,40,214.500,80,217,130,222,190,228,240,232,270,234.500,300,237.500,337,241.500,400,247,450,253,500,263,530,273.500,560,283,597,297.500,620,306,640,311,655,312.500,680,312.500,692,310.500]));
</script>
</body>
</html>
